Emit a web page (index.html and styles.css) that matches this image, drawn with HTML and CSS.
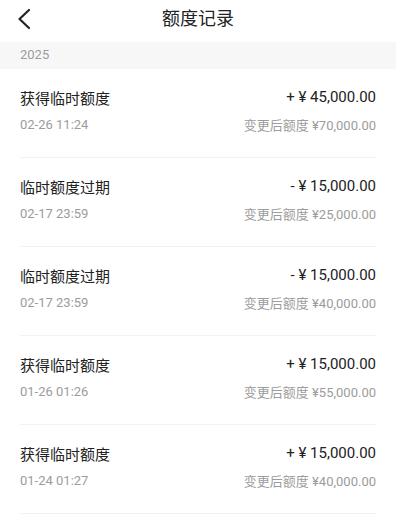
FILE: index.html
```html
<!DOCTYPE html>
<html lang="zh-CN">
<head>
    <meta charset="UTF-8">
    <meta name="viewport" content="width=device-width, initial-scale=1.0">
    <title>额度记录</title>
    <link rel="stylesheet" href="styles.css">
</head>
<body>
    <div class="page">
        <div class="header">
            <span class="back">
                <svg width="16" height="22" viewBox="0 0 16 22"><path d="M13 2 L3.5 11 L13 20" fill="none" stroke="#222" stroke-width="2.2" stroke-linecap="round" stroke-linejoin="round"/></svg>
            </span>
            <h1>额度记录</h1>
        </div>

        <div class="year">2025</div>

        <div class="list">
            <div class="record">
                <div class="row">
                    <span class="name">获得临时额度</span>
                    <span class="amount">+ ¥ 45,000.00</span>
                </div>
                <div class="row sub">
                    <span>02-26 11:24</span>
                    <span>变更后额度 ¥70,000.00</span>
                </div>
            </div>
            <div class="record">
                <div class="row">
                    <span class="name">临时额度过期</span>
                    <span class="amount">- ¥ 15,000.00</span>
                </div>
                <div class="row sub">
                    <span>02-17 23:59</span>
                    <span>变更后额度 ¥25,000.00</span>
                </div>
            </div>
            <div class="record">
                <div class="row">
                    <span class="name">临时额度过期</span>
                    <span class="amount">- ¥ 15,000.00</span>
                </div>
                <div class="row sub">
                    <span>02-17 23:59</span>
                    <span>变更后额度 ¥40,000.00</span>
                </div>
            </div>
            <div class="record">
                <div class="row">
                    <span class="name">获得临时额度</span>
                    <span class="amount">+ ¥ 15,000.00</span>
                </div>
                <div class="row sub">
                    <span>01-26 01:26</span>
                    <span>变更后额度 ¥55,000.00</span>
                </div>
            </div>
            <div class="record">
                <div class="row">
                    <span class="name">获得临时额度</span>
                    <span class="amount">+ ¥ 15,000.00</span>
                </div>
                <div class="row sub">
                    <span>01-24 01:27</span>
                    <span>变更后额度 ¥40,000.00</span>
                </div>
            </div>
        </div>
    </div>
</body>
</html>
```

FILE: styles.css
```css
body {
    margin: 0;
    background: #fff;
    font-family: Roboto, "Noto Sans CJK SC", sans-serif;
    color: #222;
}
.page {
    width: 396px;
    height: 514px;
    overflow: hidden;
}
.header {
    height: 42px;
    display: flex;
    align-items: center;
    justify-content: center;
    position: relative;
}
.back {
    position: absolute;
    left: 16px;
    top: 8px;
    display: flex;
}
.header h1 {
    margin: 0 0 4px;
    font-size: 18px;
    font-weight: 400;
    line-height: 24px;
}
.year {
    height: 27px;
    line-height: 26px;
    background: #f7f7f7;
    padding: 0 20px;
    font-size: 13px;
    color: #9c9c9c;
}
.list {
    padding: 0 20px;
}
.record {
    padding: 18px 0 24px;
    border-bottom: 1px solid #f2f2f2;
}
.row {
    display: flex;
    justify-content: space-between;
    align-items: center;
    height: 20px;
    font-size: 15px;
}
.amount {
    font-size: 15px;
}
.row.sub {
    height: 18px;
    margin-top: 8px;
    font-size: 13px;
    color: #9c9c9c;
}
```
